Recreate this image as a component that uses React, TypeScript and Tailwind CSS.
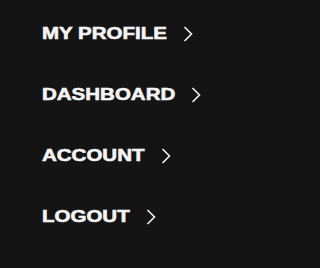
const items = ['MY PROFILE', 'DASHBOARD', 'ACCOUNT', 'LOGOUT']

function Chevron() {
    return (
        <svg width="10" height="16" viewBox="0 0 10 16" fill="none" className="ml-[16px] shrink-0">
            <polyline points="1.5,1 8.5,8 1.5,15" stroke="#f2f2f2" strokeWidth="1.6" />
        </svg>
    )
}

export default function App() {
    return (
        <div className="w-full min-h-screen bg-[#141414] pl-[42px] pt-[3px] flex flex-col">
            {items.map((item) => (
                <a key={item} href="#" className="h-[61px] flex items-center">
                    <span className="inline-block scale-y-[0.82] text-[20.5px] leading-none font-bold text-[#f5f5f5] [-webkit-text-stroke:0.7px_#f5f5f5] font-['Liberation_Sans',Arial,sans-serif] whitespace-nowrap">
                        {item}
                    </span>
                    <Chevron />
                </a>
            ))}
        </div>
    )
}
